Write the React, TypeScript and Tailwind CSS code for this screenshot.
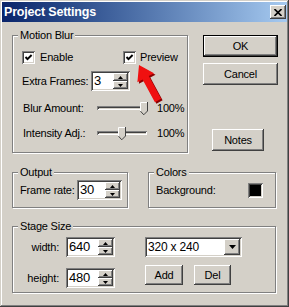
import React from "react";

const raised =
  "shadow-[inset_-1px_-1px_0_#404040,inset_1px_1px_0_#ffffff,inset_-2px_-2px_0_#808080,inset_2px_2px_0_#d4d0c8]";
const sunken =
  "shadow-[inset_1px_1px_0_#808080,inset_-1px_-1px_0_#ffffff,inset_2px_2px_0_#404040,inset_-2px_-2px_0_#d4d0c8]";

function Group({ label, className, children }: { label: string; className: string; children?: React.ReactNode }) {
  return (
    <div className={`relative border border-[#808080] shadow-[1px_1px_0_#ffffff,inset_1px_1px_0_#ffffff] ${className}`}>
      <span className="absolute -top-[8px] left-[5px] bg-[#d4d0c8] px-[2px] leading-[14px]">{label}</span>
      {children}
    </div>
  );
}

function Button({ label, className }: { label: string; className: string }) {
  return (
    <div className={`flex items-center justify-center bg-[#d4d0c8] ${raised} ${className}`}>{label}</div>
  );
}

function Spin({ value, width }: { value: string; width: string }) {
  return (
    <div className={`flex h-[20px] bg-[#d4d0c8] ${sunken} p-[2px] ${width}`}>
      <div className="flex-1 bg-white pl-[1px] leading-[16px] text-[13px]">{value}</div>
      <div className="flex w-[15px] flex-col">
        <div className={`flex flex-1 items-center justify-center ${raised}`}>
          <svg width="5" height="3" viewBox="0 0 5 3">
            <polygon points="0,3 5,3 2.5,0" fill="#000" />
          </svg>
        </div>
        <div className={`flex flex-1 items-center justify-center ${raised}`}>
          <svg width="5" height="3" viewBox="0 0 5 3">
            <polygon points="0,0 5,0 2.5,3" fill="#000" />
          </svg>
        </div>
      </div>
    </div>
  );
}

function Check() {
  return (
    <div className={`flex h-[13px] w-[13px] items-center justify-center bg-white ${sunken}`}>
      <svg width="9" height="9" viewBox="0 0 9 9">
        <polyline points="1.5,4 3.5,6.2 7.6,2" fill="none" stroke="#000" strokeWidth="1.9" />
      </svg>
    </div>
  );
}

function Thumb() {
  return (
    <svg width="8" height="13" viewBox="0 0 8 13">
      <path d="M0.5 0.5 H7 V9 L3.75 12.5 L0.5 9 Z" fill="#d4d0c8" />
      <polyline points="0.5,9 0.5,0.5 7,0.5" fill="none" stroke="#fff" />
      <polyline points="7.5,0 7.5,9 3.75,12.8 0.5,9.2" fill="none" stroke="#404040" />
    </svg>
  );
}

function Slider({ pos }: { pos: string }) {
  return (
    <div className="relative h-[4px] w-[50px] shadow-[inset_1px_1px_0_#808080,inset_-1px_-1px_0_#ffffff,inset_2px_2px_0_#404040]">
      <div className={`absolute -top-[4px] ${pos}`}>
        <Thumb />
      </div>
    </div>
  );
}

export default function App() {
  return (
    <div className="relative h-[307px] w-[289px] bg-[#d4d0c8] p-[2px] font-['Liberation_Sans',Arial,sans-serif] text-[11px] tracking-[-0.2px] text-black shadow-[inset_-1px_-1px_0_#404040,inset_1px_1px_0_#d4d0c8,inset_-2px_-2px_0_#808080,inset_2px_2px_0_#ffffff]">
      {/* Title bar */}
      <div className="flex h-[20px] items-center justify-between bg-gradient-to-r from-[#0a246a] to-[#a6caf0] pl-[2px] pr-[1px]">
        <span className="text-[12.5px] font-bold tracking-[-0.2px] text-white">Project Settings</span>
        <div className={`flex h-[14px] w-[16px] items-center justify-center bg-[#d4d0c8] ${raised}`}>
          <svg width="8" height="7" viewBox="0 0 8 7">
            <path d="M0.5 0 L7.5 7 M7.5 0 L0.5 7" stroke="#000" strokeWidth="1.6" />
          </svg>
        </div>
      </div>

      <div className="pl-[10px] pt-[13px]">
        {/* Top row */}
        <div className="flex">
          <Group label="Motion Blur" className="h-[118px] w-[176px] pl-[9px] pt-[15px]">
            <div className="flex h-[13px] items-center">
              <div className="flex w-[101px] items-center">
                <Check />
                <span className="ml-[5px]">Enable</span>
              </div>
              <Check />
              <span className="ml-[4px]">Preview</span>
            </div>
            <div className="mt-[6px] flex h-[22px] items-center">
              <span className="w-[69px]">Extra Frames:</span>
              <Spin value="3" width="w-[39px]" />
            </div>
            <div className="mt-[8px] flex h-[16px] items-center">
              <span className="w-[75px] pl-[1px]">Blur Amount:</span>
              <Slider pos="left-[43px]" />
              <span className="ml-[10px]">100%</span>
            </div>
            <div className="mt-[9px] flex h-[16px] items-center">
              <span className="w-[75px] pl-[1px]">Intensity Adj.:</span>
              <Slider pos="left-[21px]" />
              <span className="ml-[10px]">100%</span>
            </div>
          </Group>

          <div className="ml-[15px] flex flex-col">
            <div className="border border-black">
              <Button label="OK" className="h-[20px] w-[73px]" />
            </div>
            <Button label="Cancel" className="mt-[6px] h-[22px] w-[75px]" />
            <Button label="Notes" className="ml-[9px] mt-[44px] h-[22px] w-[52px]" />
          </div>
        </div>

        {/* Output / Colors */}
        <div className="mt-[19px] flex">
          <Group label="Output" className="h-[36px] w-[116px] pl-[7px] pt-[7px]">
            <div className="flex h-[20px] items-center">
              <span className="w-[57px]">Frame rate:</span>
              <Spin value="30" width="w-[45px]" />
            </div>
          </Group>
          <Group label="Colors" className="ml-[20px] h-[36px] w-[128px] pl-[7px] pr-[12px] pt-[7px]">
            <div className="flex h-[20px] items-center justify-between">
              <span>Background:</span>
              <div className={`h-[15px] w-[15px] bg-black ${sunken}`} />
            </div>
          </Group>
        </div>

        {/* Stage Size */}
        <Group label="Stage Size" className="mt-[18px] flex h-[67px] w-[264px] pt-[10px]">
          <div className="flex flex-col">
            <div className="flex h-[20px] items-center">
              <span className="w-[46px] text-right">width:</span>
              <div className="ml-[7px]">
                <Spin value="640" width="w-[49px]" />
              </div>
            </div>
            <div className="mt-[11px] flex h-[20px] items-center">
              <span className="w-[46px] text-right">height:</span>
              <div className="ml-[7px]">
                <Spin value="480" width="w-[49px]" />
              </div>
            </div>
          </div>
          <div className="ml-[30px] flex flex-col">
            <div className={`flex h-[20px] w-[97px] bg-white p-[2px] ${sunken}`}>
              <div className="flex-1 pl-[1px] leading-[16px] text-[12px]">320 x 240</div>
              <div className={`flex w-[16px] items-center justify-center bg-[#d4d0c8] ${raised}`}>
                <svg width="7" height="4" viewBox="0 0 7 4">
                  <polygon points="0,0 7,0 3.5,4" fill="#000" />
                </svg>
              </div>
            </div>
            <div className="mt-[8px] flex">
              <Button label="Add" className="h-[20px] w-[38px]" />
              <Button label="Del" className="ml-[11px] h-[20px] w-[37px]" />
            </div>
          </div>
        </Group>
      </div>

      {/* Red arrow annotation */}
      <svg className="pointer-events-none absolute left-0 top-0" width="289" height="307" viewBox="0 0 289 307">
        <polygon
          points="140.5,66.5 155.5,74.8 150.3,77.6 162.6,100.3 156.4,103.7 144.1,81 138.9,83.8"
          fill="#8a0000"
        />
        <polygon
          points="139,65 154,73.3 148.8,76.1 161.1,98.8 154.9,102.2 142.6,79.5 137.4,82.3"
          fill="#f01010"
        />
      </svg>
    </div>
  );
}
